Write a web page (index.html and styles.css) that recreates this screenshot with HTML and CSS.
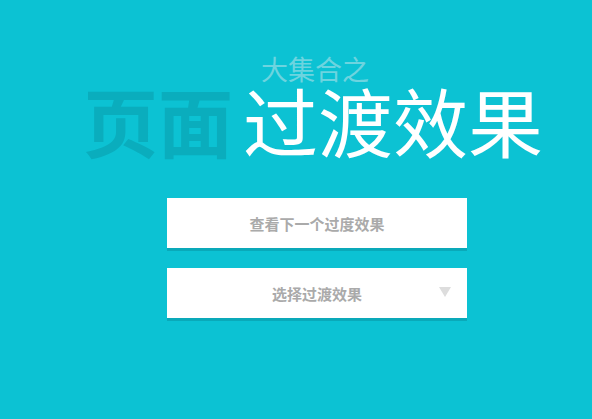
FILE: index.html
```html
<!DOCTYPE html>
<html lang="zh">
<head>
<meta charset="utf-8">
<title>页面过渡效果</title>
<link rel="stylesheet" href="styles.css">
</head>
<body>
<div class="page">
  <header class="head">
    <div class="sub">大集合之</div>
    <h1 class="title"><span class="dim">页面</span><span class="bright">过渡效果</span></h1>
  </header>
  <div class="controls">
    <button class="btn">查看下一个过度效果</button>
    <div class="btn select">
      <span>选择过渡效果</span>
      <i class="arrow"></i>
    </div>
  </div>
</div>
</body>
</html>
```
FILE: styles.css
```css
html, body {
  margin: 0;
  padding: 0;
}
body {
  background: #0cc2d3;
  width: 592px;
  height: 419px;
  overflow: hidden;
  font-family: "Noto Sans CJK SC", "Noto Sans", sans-serif;
}
.page {
  display: flex;
  flex-direction: column;
}
.head {
  padding-top: 54px;
}
.sub {
  margin-left: 261px;
  font-size: 27px;
  line-height: 30px;
  color: #6dd4df;
}
.title {
  margin: 0 0 0 83px;
  font-size: 75px;
  line-height: 72px;
  font-weight: normal;
  display: flex;
  gap: 10px;
}
.dim {
  color: #0aadbd;
  font-weight: bold;
}
.bright {
  color: #ffffff;
}
.controls {
  margin-top: 42px;
  margin-left: 167px;
  display: flex;
  flex-direction: column;
  gap: 20px;
}
.btn {
  box-sizing: border-box;
  width: 300px;
  height: 50px;
  border: none;
  background: #ffffff;
  box-shadow: 0 3px 0 #0aa9b9;
  color: #aaaaaa;
  font-family: "Noto Sans CJK SC", "Noto Sans", sans-serif;
  font-size: 15px;
  font-weight: bold;
  display: flex;
  align-items: center;
  justify-content: center;
  padding: 0;
}
.select {
  position: relative;
}
.arrow {
  position: absolute;
  right: 16px;
  top: 19px;
  width: 0;
  height: 0;
  border-left: 6px solid transparent;
  border-right: 6px solid transparent;
  border-top: 10px solid #dddddd;
}
```
